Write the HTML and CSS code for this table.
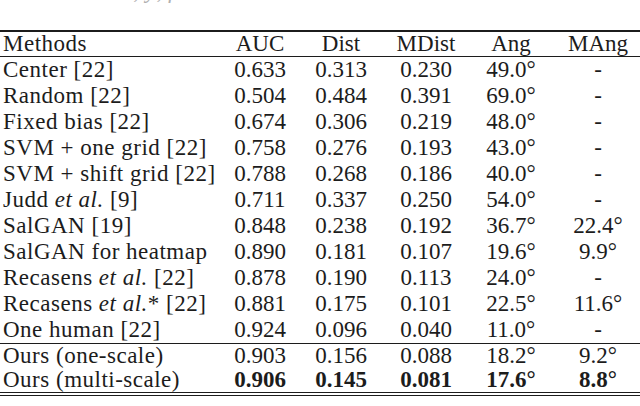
FILE: index.html
```html
<!DOCTYPE html>
<html>
<head>
<meta charset="utf-8">
<link rel="stylesheet" href="styles.css">
</head>
<body>
<div class="page">
  <p class="caption">on the test set, <i>y</i>, <i>ρ</i></p>
  <table class="results">
    <colgroup>
      <col class="c-method">
      <col class="c-auc">
      <col class="c-dist">
      <col class="c-mdist">
      <col class="c-ang">
      <col class="c-mang">
    </colgroup>
    <thead>
      <tr>
        <th class="name">Methods</th>
        <th>AUC</th>
        <th>Dist</th>
        <th>MDist</th>
        <th>Ang</th>
        <th>MAng</th>
      </tr>
    </thead>
    <tbody class="baselines">
      <tr><td class="name">Center [22]</td><td>0.633</td><td>0.313</td><td>0.230</td><td>49.0°</td><td>-</td></tr>
      <tr><td class="name">Random [22]</td><td>0.504</td><td>0.484</td><td>0.391</td><td>69.0°</td><td>-</td></tr>
      <tr><td class="name">Fixed bias [22]</td><td>0.674</td><td>0.306</td><td>0.219</td><td>48.0°</td><td>-</td></tr>
      <tr><td class="name">SVM + one grid [22]</td><td>0.758</td><td>0.276</td><td>0.193</td><td>43.0°</td><td>-</td></tr>
      <tr><td class="name">SVM + shift grid [22]</td><td>0.788</td><td>0.268</td><td>0.186</td><td>40.0°</td><td>-</td></tr>
      <tr><td class="name">Judd <em>et al.</em> [9]</td><td>0.711</td><td>0.337</td><td>0.250</td><td>54.0°</td><td>-</td></tr>
      <tr><td class="name">SalGAN [19]</td><td>0.848</td><td>0.238</td><td>0.192</td><td>36.7°</td><td>22.4°</td></tr>
      <tr><td class="name">SalGAN for heatmap</td><td>0.890</td><td>0.181</td><td>0.107</td><td>19.6°</td><td>9.9°</td></tr>
      <tr><td class="name">Recasens <em>et al.</em> [22]</td><td>0.878</td><td>0.190</td><td>0.113</td><td>24.0°</td><td>-</td></tr>
      <tr><td class="name">Recasens <em>et al.</em>* [22]</td><td>0.881</td><td>0.175</td><td>0.101</td><td>22.5°</td><td>11.6°</td></tr>
      <tr><td class="name">One human [22]</td><td>0.924</td><td>0.096</td><td>0.040</td><td>11.0°</td><td>-</td></tr>
    </tbody>
    <tbody class="ours">
      <tr><td class="name">Ours (one-scale)</td><td>0.903</td><td>0.156</td><td>0.088</td><td>18.2°</td><td>9.2°</td></tr>
      <tr class="best"><td class="name">Ours (multi-scale)</td><td><b>0.906</b></td><td><b>0.145</b></td><td><b>0.081</b></td><td><b>17.6°</b></td><td><b>8.8°</b></td></tr>
    </tbody>
  </table>
</div>
</body>
</html>
```
FILE: styles.css
```css
html, body {
  margin: 0;
  padding: 0;
  background: #ffffff;
  overflow: hidden;
}

.page {
  width: 640px;
  height: 406px;
  overflow: hidden;
  font-family: "Liberation Serif", Tinos, "Times New Roman", Times, "Noto Serif", "DejaVu Serif", FreeSerif, serif;
  color: #1c1c1c;
}

.caption {
  margin: -22px 0 0 0;
  height: 26px;
  font-size: 23px;
  line-height: 26px;
  color: #b0b0b0;
  white-space: nowrap;
  letter-spacing: 0.5px;
}

.results {
  margin-top: 26px;
  width: 644px;
  table-layout: fixed;
  border-collapse: collapse;
  font-family: inherit;
  font-size: 23px;
}

.c-method { width: 220px; }
.c-auc { width: 80px; }
.c-dist { width: 82px; }
.c-mdist { width: 88px; }
.c-ang { width: 82px; }
.c-mang { width: 92px; }

.results th,
.results td {
  padding: 0;
  text-align: center;
  font-weight: normal;
  white-space: nowrap;
  line-height: 26px;
  height: 26px;
}

.results thead tr {
  border-top: 2px solid #1c1c1c;
  border-bottom: 1px solid #1c1c1c;
}

.results thead th {
  height: 24px;
  line-height: 24px;
}

.results .name {
  text-align: left;
  padding-left: 3px;
  letter-spacing: 0.5px;
}

.results em {
  font-style: italic;
}

.ours {
  border-top: 1px solid #1c1c1c;
  border-bottom: 4px double #1c1c1c;
}

.ours td {
  height: 24px;
  line-height: 24px;
}

.best b {
  font-weight: bold;
}
```
